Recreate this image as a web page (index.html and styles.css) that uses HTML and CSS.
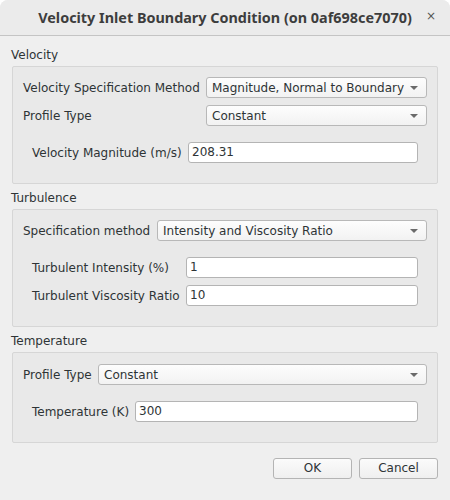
FILE: index.html
```html
<!DOCTYPE html>
<html>
<head>
<meta charset="utf-8">
<link rel="stylesheet" href="styles.css">
</head>
<body>
<div class="window">
  <div class="titlebar">
    <div class="title">Velocity Inlet Boundary Condition (on 0af698ce7070)</div>
    <div class="close">×</div>
  </div>
  <div class="content">
    <div class="section-label">Velocity</div>
    <div class="group group-velocity">
      <div class="grid grid-vel">
        <div class="lbl">Velocity Specification Method</div>
        <div class="combo"><span>Magnitude, Normal to Boundary</span><i class="arrow"></i></div>
        <div class="lbl">Profile Type</div>
        <div class="combo"><span>Constant</span><i class="arrow"></i></div>
      </div>
      <div class="sub grid grid-velmag">
        <div class="lbl">Velocity Magnitude (m/s)</div>
        <div class="input">208.31</div>
      </div>
    </div>

    <div class="section-label">Turbulence</div>
    <div class="group group-turb">
      <div class="grid grid-spec">
        <div class="lbl">Specification method</div>
        <div class="combo"><span>Intensity and Viscosity Ratio</span><i class="arrow"></i></div>
      </div>
      <div class="sub grid grid-turb">
        <div class="lbl">Turbulent Intensity (%)</div>
        <div class="input">1</div>
        <div class="lbl">Turbulent Viscosity Ratio</div>
        <div class="input">10</div>
      </div>
    </div>

    <div class="section-label">Temperature</div>
    <div class="group group-temp">
      <div class="grid grid-prof">
        <div class="lbl">Profile Type</div>
        <div class="combo"><span>Constant</span><i class="arrow"></i></div>
      </div>
      <div class="sub grid grid-temp">
        <div class="lbl">Temperature (K)</div>
        <div class="input">300</div>
      </div>
    </div>

    <div class="buttons">
      <div class="btn">OK</div>
      <div class="btn">Cancel</div>
    </div>
  </div>
</div>
</body>
</html>
```

FILE: styles.css
```css
html, body {
  margin: 0;
  padding: 0;
  background: #ffffff;
}
body {
  width: 450px;
  height: 500px;
  overflow: hidden;
  font-family: "DejaVu Sans", sans-serif;
  font-size: 12px;
  color: #2e3436;
}
.window {
  width: 450px;
  height: 500px;
  background: #efefef;
  border-radius: 8px 8px 0 0;
  overflow: hidden;
}
.titlebar {
  height: 35px;
  border-bottom: 1px solid #c4c4c4;
  background: #ebebeb;
  position: relative;
  display: flex;
  align-items: center;
  justify-content: center;
}
.title {
  font-family: "Noto Sans", "DejaVu Sans", sans-serif;
  font-weight: bold;
  font-size: 14.4px;
  color: #3d3d3d;
}
.close {
  position: absolute;
  right: 14px;
  top: 9px;
  font-size: 12px;
  color: #555;
}
.content {
  padding: 10px 12px 0 12px;
}
.section-label {
  height: 18px;
  line-height: 18px;
  margin-left: -1px;
}
.group {
  border: 1px solid #d6d6d6;
  border-radius: 2px;
  background: #e9e9e9;
  box-sizing: border-box;
  margin-top: 2px;
  margin-bottom: 5px;
}
.grid {
  display: grid;
  align-items: center;
}
.lbl {
  white-space: nowrap;
}
.combo {
  height: 21px;
  box-sizing: border-box;
  border: 1px solid #b8b8b8;
  border-radius: 3px;
  background: linear-gradient(#fdfdfd, #f2f2f2);
  display: flex;
  align-items: center;
  justify-content: space-between;
  padding: 0 8px 0 5px;
}
.arrow {
  width: 0;
  height: 0;
  border-left: 4px solid transparent;
  border-right: 4px solid transparent;
  border-top: 4px solid #6a6a6a;
}
.input {
  height: 21px;
  box-sizing: border-box;
  border: 1px solid #b4b4b4;
  border-radius: 3px;
  background: #ffffff;
  line-height: 19px;
  padding-left: 3px;
}
.sub {
  margin: 0 9px;
}

/* Velocity */
.group-velocity {
  height: 118px;
  padding: 10px 10px 0 10px;
}
.grid-vel {
  grid-template-columns: 183px 1fr;
  row-gap: 7px;
}
.grid-velmag {
  margin-top: 16px;
  grid-template-columns: 156px 1fr;
}

/* Turbulence */
.group-turb {
  height: 118px;
  padding: 10px 10px 0 10px;
}
.grid-spec {
  grid-template-columns: 134px 1fr;
}
.grid-turb {
  margin-top: 16px;
  grid-template-columns: 154px 1fr;
  row-gap: 7px;
}

/* Temperature */
.group-temp {
  height: 91px;
  padding: 11px 10px 0 10px;
}
.grid-prof {
  grid-template-columns: 75px 1fr;
}
.grid-temp {
  margin-top: 16px;
  grid-template-columns: 103px 1fr;
}

.buttons {
  display: flex;
  justify-content: flex-end;
  gap: 7px;
  margin-top: 15px;
}
.btn {
  width: 79px;
  height: 21px;
  box-sizing: border-box;
  border: 1px solid #b4b4b4;
  border-radius: 3px;
  background: linear-gradient(#fbfbfb, #efefef);
  text-align: center;
  line-height: 19px;
}
```
